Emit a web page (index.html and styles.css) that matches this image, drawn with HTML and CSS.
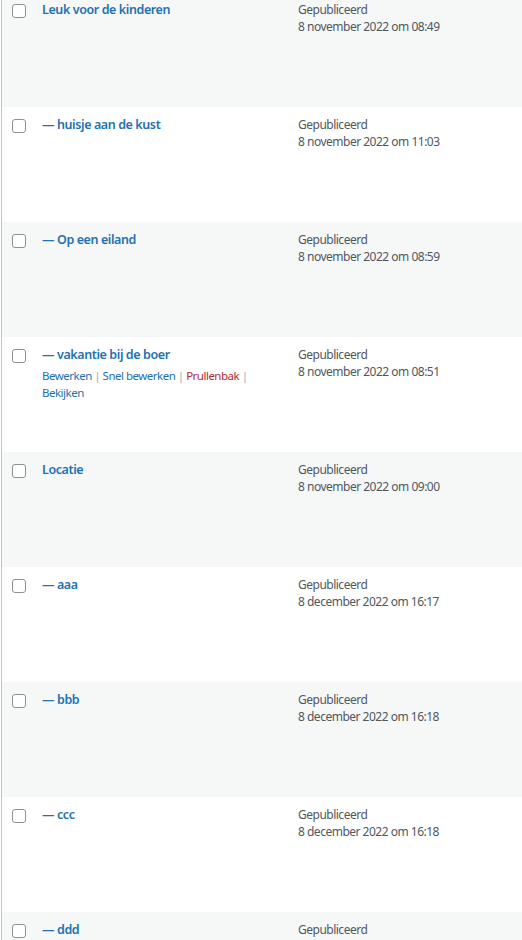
FILE: index.html
```html
<!DOCTYPE html>
<html lang="nl">
<head>
<meta charset="utf-8">
<title>Berichten</title>
<link rel="stylesheet" href="styles.css">
</head>
<body>
<div class="list">
  <div class="row alt">
    <div class="cb"><span class="box"></span></div>
    <div class="title"><a class="row-title">Leuk voor de kinderen</a></div>
    <div class="date">Gepubliceerd<br>8 november 2022 om 08:49</div>
  </div>
  <div class="row">
    <div class="cb"><span class="box"></span></div>
    <div class="title"><a class="row-title">— huisje aan de kust</a></div>
    <div class="date">Gepubliceerd<br>8 november 2022 om 11:03</div>
  </div>
  <div class="row alt">
    <div class="cb"><span class="box"></span></div>
    <div class="title"><a class="row-title">— Op een eiland</a></div>
    <div class="date">Gepubliceerd<br>8 november 2022 om 08:59</div>
  </div>
  <div class="row">
    <div class="cb"><span class="box"></span></div>
    <div class="title">
      <a class="row-title">— vakantie bij de boer</a>
      <div class="actions"><a>Bewerken</a>&nbsp;<span class="sep">|</span> <a>Snel bewerken</a>&nbsp;<span class="sep">|</span> <a class="trash">Prullenbak</a>&nbsp;<span class="sep">|</span> <a>Bekijken</a></div>
    </div>
    <div class="date">Gepubliceerd<br>8 november 2022 om 08:51</div>
  </div>
  <div class="row alt">
    <div class="cb"><span class="box"></span></div>
    <div class="title"><a class="row-title">Locatie</a></div>
    <div class="date">Gepubliceerd<br>8 november 2022 om 09:00</div>
  </div>
  <div class="row">
    <div class="cb"><span class="box"></span></div>
    <div class="title"><a class="row-title">— aaa</a></div>
    <div class="date">Gepubliceerd<br>8 december 2022 om 16:17</div>
  </div>
  <div class="row alt">
    <div class="cb"><span class="box"></span></div>
    <div class="title"><a class="row-title">— bbb</a></div>
    <div class="date">Gepubliceerd<br>8 december 2022 om 16:18</div>
  </div>
  <div class="row">
    <div class="cb"><span class="box"></span></div>
    <div class="title"><a class="row-title">— ccc</a></div>
    <div class="date">Gepubliceerd<br>8 december 2022 om 16:18</div>
  </div>
  <div class="row alt">
    <div class="cb"><span class="box"></span></div>
    <div class="title"><a class="row-title">— ddd</a></div>
    <div class="date">Gepubliceerd<br>8 december 2022 om 16:18</div>
  </div>
</div>
</body>
</html>
```
FILE: styles.css
```css
html, body {
  margin: 0;
  padding: 0;
  background: #fff;
  overflow: hidden;
}
body {
  font-family: "Noto Sans", "Open Sans", sans-serif;
  font-size: 13px;
  color: #3c434a;
}
.list {
  margin: -8px 0 0 1px;
  border-left: 1px solid #c3c4c7;
}
.row {
  display: grid;
  grid-template-columns: 40px 256px 1fr;
  height: 115px;
  box-sizing: border-box;
  background: #fff;
}
.row.alt {
  background: #f6f7f7;
}
.cb {
  padding: 12px 0 0 10px;
}
.box {
  display: block;
  width: 12px;
  height: 12px;
  border: 1px solid #8c8f94;
  border-radius: 3px;
  background: #fff;
}
.title {
  padding: 9px 24px 0 0;
}
.row-title {
  display: block;
  font-size: 12.5px;
  font-weight: 600;
  letter-spacing: -0.4px;
  line-height: 18px;
  color: #2271b1;
}
.actions {
  margin-top: 3px;
  font-size: 11.5px;
  letter-spacing: -0.5px;
  line-height: 17px;
  color: #a7aaad;
}
.actions a {
  color: #2271b1;
}
.actions a.trash {
  color: #b32d2e;
}
.date {
  padding-top: 10px;
  font-size: 12px;
  letter-spacing: -0.5px;
  line-height: 16.5px;
  color: #50575e;
}
```
